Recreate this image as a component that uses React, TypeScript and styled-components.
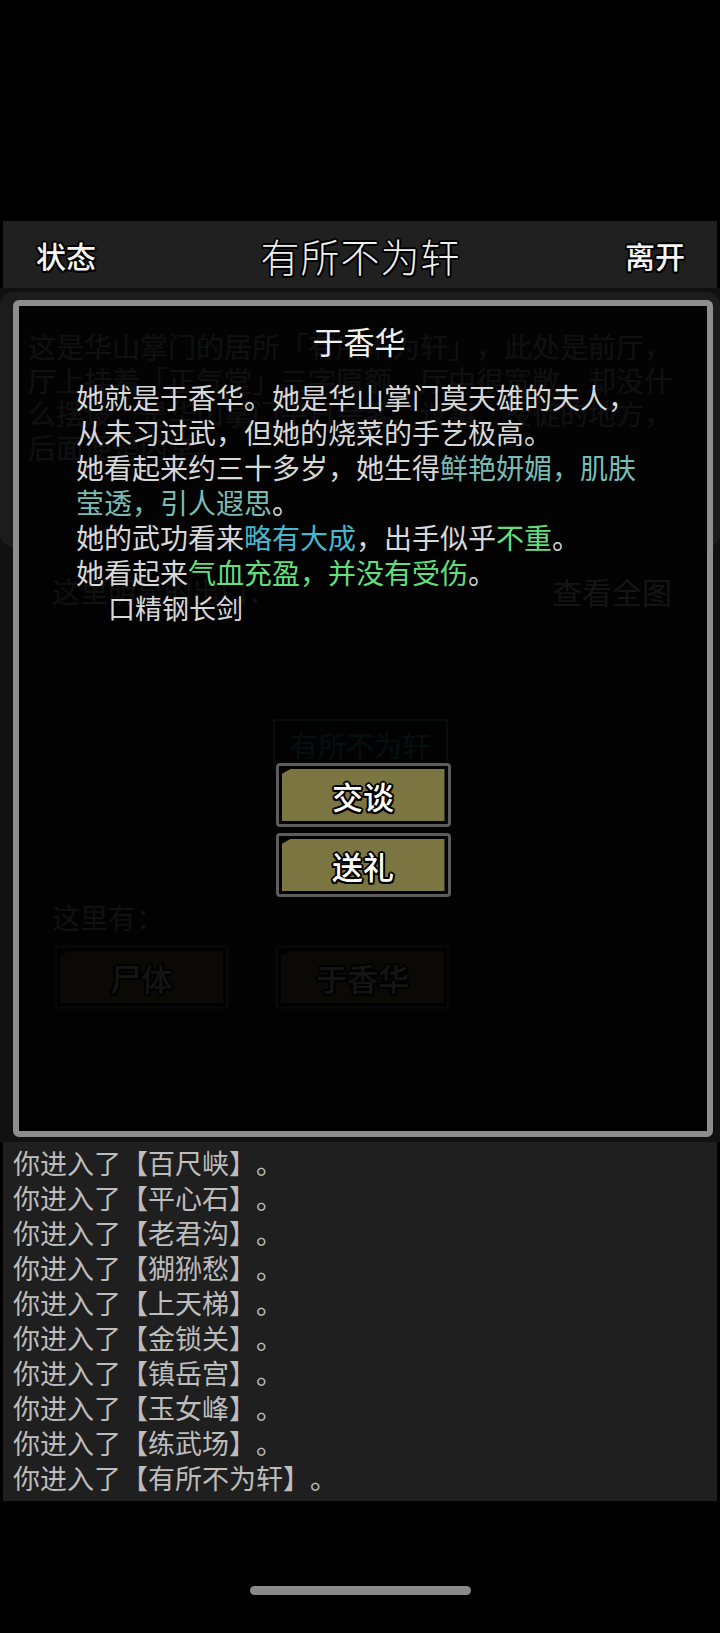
import React from 'react'
import styled, {createGlobalStyle} from 'styled-components'

const GlobalStyle = createGlobalStyle`
  html, body {
    margin: 0;
    padding: 0;
    background: #000;
  }
  body {
    font-family: "Noto Sans CJK SC", "Noto Sans", sans-serif;
    text-spacing-trim: space-all;
  }
  * {
    box-sizing: border-box;
  }
`

const outline = `
  text-shadow:
    2px 0 0 #000, -2px 0 0 #000, 0 2px 0 #000, 0 -2px 0 #000,
    1.5px 1.5px 0 #000, -1.5px -1.5px 0 #000, 1.5px -1.5px 0 #000, -1.5px 1.5px 0 #000;
`

const Screen = styled.div`
  width: 720px;
  height: 1633px;
  background: #000;
  display: flex;
  flex-direction: column;
  padding-top: 221px;
`

const Header = styled.div`
  margin: 0 3px;
  height: 67px;
  background: #202020;
  display: flex;
  align-items: center;
  justify-content: space-between;
  padding: 0 32px 0 33px;
`

const HeaderLink = styled.span`
  font-size: 30px;
  font-weight: 500;
  color: #f4f4f4;
  ${outline}
`

const HeaderTitle = styled.span`
  font-size: 39px;
  font-weight: 300;
  color: #eeeeee;
  letter-spacing: 1px;
  ${outline}
`

const Stage = styled.div`
  position: relative;
  height: 854px;
  background: #1c1c1c;
  overflow: hidden;
`

const Desc = styled.div`
  margin-top: 4px;
  height: 255px;
  border-radius: 14px;
  background: #2e2e2e;
  padding: 38px 0 0 28px;
  font-size: 28px;
  line-height: 33.5px;
  color: #c8c8c8;
  p {
    margin: 0;
    width: 650px;
  }
`

const ExitsRow = styled.div`
  margin-top: 24px;
  height: 40px;
  display: flex;
  align-items: center;
  justify-content: space-between;
  padding: 0 48px 0 52px;
  font-size: 28px;
  color: #c8c8c8;
`

const MapLink = styled.span`
  font-size: 30px;
  color: #ffffff;
`

const RoomBox = styled.div<{ $current?: boolean }>`
  width: 175px;
  height: ${p => (p.$current ? 52 : 40)}px;
  margin: ${p => (p.$current ? '108px' : '54px')} auto 0;
  border: 2px solid ${p => (p.$current ? '#3fa8a0' : 'transparent')};
  color: ${p => (p.$current ? '#4cc0b8' : '#c8c8c8')};
  font-size: 28px;
  display: flex;
  align-items: center;
  justify-content: center;
`

const HereLabel = styled.div`
  margin-top: 32px;
  height: 40px;
  line-height: 40px;
  padding-left: 52px;
  font-size: 28px;
  color: #c8c8c8;
`

const NpcRow = styled.div`
  margin-top: 8px;
  padding-left: 54px;
  display: flex;
  gap: 46px;
`

const ActionButton = styled.div`
  width: 175px;
  height: 64px;
  border: 3px solid #5c5c5c;
  border-radius: 4px;
  background: #000;
  padding: 3px;
`

const ActionFace = styled.div`
  height: 100%;
  background: #7b7541;
  clip-path: polygon(9px 0, 100% 0, 100% 100%, 0 100%, 0 5px);
  display: flex;
  align-items: center;
  justify-content: center;
  font-size: 31px;
  font-weight: 500;
  color: #ffffff;
  ${outline}
`

const Overlay = styled.div`
  position: absolute;
  inset: 0;
  background: rgba(0, 0, 0, 0.38);
  padding: 12px 7px 5px 13px;
  display: flex;
`

const Modal = styled.div`
  flex: 1;
  border: 6px solid #8e8e8e;
  border-radius: 6px;
  background: rgba(0, 0, 0, 0.87);
  padding: 14px 0 0 57px;
  display: flex;
  flex-direction: column;
`

const ModalTitle = styled.div`
  width: 566px;
  text-align: center;
  font-size: 31px;
  line-height: 42px;
  color: #f2f2f2;
`

const ModalBody = styled.div`
  margin-top: 18px;
  width: 566px;
  font-size: 28px;
  line-height: 35px;
  color: #d8d8d8;
  p {
    margin: 0;
  }
`

const Item = styled.p`
  padding-left: 32px;
  font-size: 27px;
`

const Tone = styled.span<{ $tone: 'teal' | 'blue' | 'green' }>`
  color: ${p => ({teal: '#78bdb5', blue: '#45b8cf', green: '#62df7c'}[p.$tone])};
`

const ModalActions = styled.div`
  margin-top: 138px;
  align-self: center;
  margin-left: -57px;
  display: flex;
  flex-direction: column;
  gap: 6px;
`

const Log = styled.div`
  margin: 0 3px;
  background: #1f1f1f;
  padding: 3px 10px 6px;
  font-size: 27px;
  line-height: 35px;
  color: #bdbdbd;
  div {
    white-space: nowrap;
  }
`

const HomeBar = styled.div`
  margin: 85px 0 0 250px;
  width: 221px;
  height: 9px;
  border-radius: 5px;
  background: #8a8a8a;
`

const places = ['百尺峡', '平心石', '老君沟', '猢狲愁', '上天梯', '金锁关', '镇岳宫', '玉女峰', '练武场', '有所不为轩']

export default function App() {
    return (
        <>
            <GlobalStyle/>
            <Screen>
                <Header>
                    <HeaderLink>状态</HeaderLink>
                    <HeaderTitle>有所不为轩</HeaderTitle>
                    <HeaderLink>离开</HeaderLink>
                </Header>
                <Stage>
                    <Desc>
                        <p>这是华山掌门的居所「有所不为轩」，此处是前厅，厅上挂着「正气堂」三字匾额，厅中很宽敞，却没什么摆设，是华山掌门平日会客、议事、授徒的地方，后面便是内堂。</p>
                    </Desc>
                    <ExitsRow>
                        <span>这里明显的出口：</span>
                        <MapLink>查看全图</MapLink>
                    </ExitsRow>
                    <RoomBox $current>有所不为轩</RoomBox>
                    <RoomBox>练武场</RoomBox>
                    <HereLabel>这里有：</HereLabel>
                    <NpcRow>
                        <ActionButton><ActionFace>尸体</ActionFace></ActionButton>
                        <ActionButton><ActionFace>于香华</ActionFace></ActionButton>
                    </NpcRow>
                    <Overlay>
                        <Modal>
                            <ModalTitle>于香华</ModalTitle>
                            <ModalBody>
                                <p>她就是于香华。她是华山掌门莫天雄的夫人，从未习过武，但她的烧菜的手艺极高。</p>
                                <p>她看起来约三十多岁，她生得<Tone $tone="teal">鲜艳妍媚，肌肤莹透，引人遐思</Tone>。</p>
                                <p>她的武功看来<Tone $tone="blue">略有大成</Tone>，出手似乎<Tone $tone="green">不重</Tone>。</p>
                                <p>她看起来<Tone $tone="green">气血充盈，并没有受伤</Tone>。</p>
                                <Item>口精钢长剑</Item>
                            </ModalBody>
                            <ModalActions>
                                <ActionButton><ActionFace>交谈</ActionFace></ActionButton>
                                <ActionButton><ActionFace>送礼</ActionFace></ActionButton>
                            </ModalActions>
                        </Modal>
                    </Overlay>
                </Stage>
                <Log>
                    {places.map(p => (
                        <div key={p}>你进入了【{p}】。</div>
                    ))}
                </Log>
                <HomeBar/>
            </Screen>
        </>
    )
}
